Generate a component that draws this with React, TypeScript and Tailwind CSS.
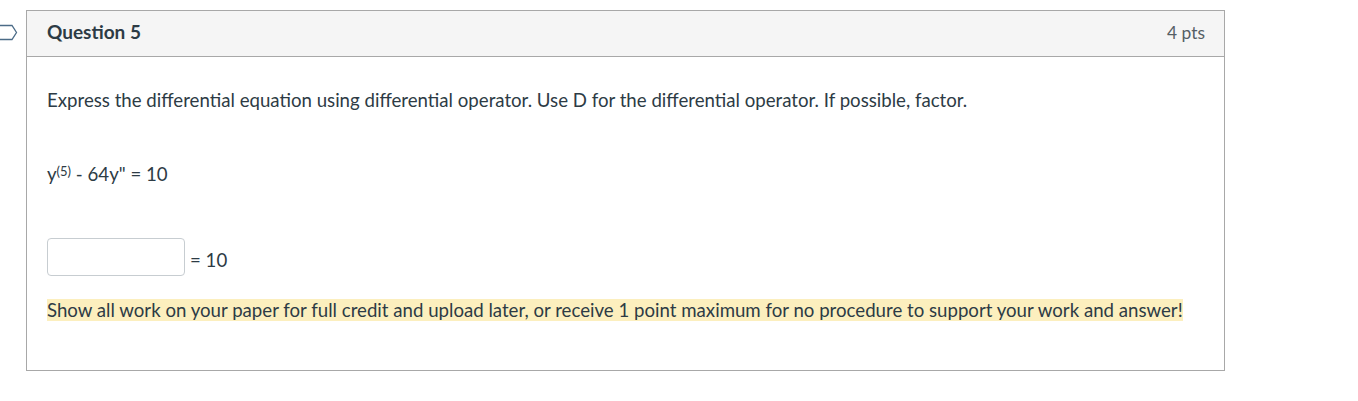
import React from "react";

export default function App() {
  return (
    <div className="relative w-[1358px] h-[401px] bg-white text-[#2d3b45]" style={{ fontFamily: "Lato, 'Noto Sans', sans-serif" }}>
      <svg className="absolute left-0 top-[24px]" width="20" height="18" viewBox="0 0 20 18">
        <path d="M-2 1.5 H12 L16.5 8.5 L12 15.5 H-2" fill="none" stroke="#4b6b87" strokeWidth="1.3" />
      </svg>
      <div className="pl-[26px] pt-[10px]">
        <div className="w-[1199px] border border-[#a8a8a8]">
          <div className="h-[46px] bg-[#f5f5f5] border-b border-[#a8a8a8] flex items-center justify-between pl-[20px] pr-[19px]">
            <span className="text-[19px] font-bold text-[#2d3b45] mt-[-2px]">Question 5</span>
            <span className="text-[17.4px] text-[#555f66]">4 pts</span>
          </div>
          <div className="pl-[20px] pt-[31px] pb-[48px] text-[18.65px] leading-[24px]">
            <p>Express the differential equation using differential operator. Use D for the differential operator. If possible, factor.</p>
            <p className="mt-[50px]">
              y<sup className="text-[13px] relative top-[-5px]">(5)</sup> - 64y" = 10
            </p>
            <div className="mt-[52px] flex items-center">
              <div className="w-[138px] h-[38px] border border-[#c7cdd1] rounded-[4px] bg-white" />
              <span className="ml-[5px] pt-[5px]">= 10</span>
            </div>
            <p className="mt-[22px]">
              <span className="bg-[#fcefbe] py-[0px]">Show all work on your paper for full credit and upload later, or receive 1 point maximum for no procedure to support your work and answer!</span>
            </p>
          </div>
        </div>
      </div>
    </div>
  );
}
